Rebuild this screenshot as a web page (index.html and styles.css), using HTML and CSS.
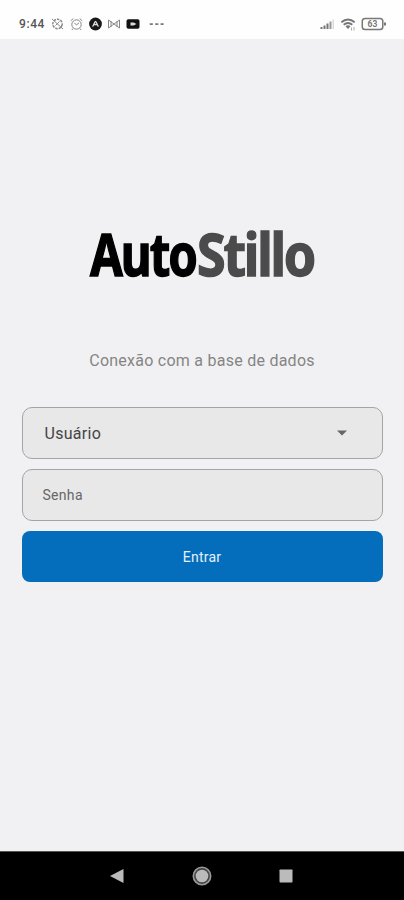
FILE: index.html
```html
<!DOCTYPE html>
<html lang="pt-BR">
<head>
<meta charset="utf-8">
<title>AutoStillo</title>
<link rel="stylesheet" href="styles.css">
</head>
<body>
<header class="status">
  <span class="clock">9:44</span>
  <svg class="status-left" width="118" height="16" viewBox="0 0 118 16" fill="none" stroke="#777" stroke-width="1">
    <g stroke="#888">
      <circle cx="7.500" cy="8" r="4.700" stroke-width="1.500" stroke-dasharray="2.500 1"/>
      <path d="M2 3l11 10M5.500 9.500l4-4M9 13l3-3"/>
    </g>
    <g stroke="#888">
      <circle cx="26.500" cy="8.500" r="4.700"/>
      <path d="M20.800 4.800l2.500-2.300M32.200 4.800l-2.500-2.300M24.300 6.800l2.200 2.200 2.500-2.200M23 12.500l-1.200 1.500M30 12.500l1.200 1.500"/>
    </g>
    <circle cx="45.500" cy="8" r="6.400" fill="#181818" stroke="none"/>
    <path d="M42.500 10.500c1.400-1.200 1.900-5 3-5s1.600 3.800 3 5M44 8.500h3" stroke="#ddd" stroke-width="1.300"/>
    <path d="M58.500 12V4l5.500 4 5.500-4v8l-5.500-4zM61 5v6M67 5v6" stroke="#888"/>
    <rect x="76.500" y="3.300" width="13" height="9.500" rx="1.800" fill="#111" stroke="none"/>
    <path d="M80.500 6.500h3l3 1.500-3 1.500h-3z" fill="#ddd" stroke="none"/>
    <g fill="#777" stroke="none"><rect x="99.500" y="7.200" width="3.600" height="1.700" rx=".8"/><rect x="105" y="7.200" width="3.600" height="1.700" rx=".8"/><rect x="110.300" y="7.200" width="3.600" height="1.700" rx=".8"/></g>
  </svg>
  <svg class="status-right" width="70" height="16" viewBox="0 0 70 16" fill="none" stroke="#777">
    <path d="M2.500 13v-2M5.500 13V9.500M8.500 13V7.500" stroke-width="2" stroke="#777"/>
    <path d="M11.500 13V5.500" stroke-width="2" stroke="#999"/>
    <path d="M14.200 13V3.500" stroke="#ccc" stroke-width="1"/>
    <path d="M22.300 6.300q6.700-5.600 13.400 0M24.700 8.800q4.300-3.600 8.600 0" stroke-width="1.900"/>
    <path d="M26.500 10.200q2.500-1.700 5 0L29 13z" fill="#777" stroke="none"/>
    <path d="M32.500 11.500v3M35 11v3.500" stroke="#aaa"/>
    <rect x="43.300" y="2.500" width="20.500" height="11" rx="2.800" stroke-width="1.500"/>
    <path d="M66 6.500v3" stroke-width="2"/>
    <text class="charge" x="53.500" y="11.200" text-anchor="middle">63</text>
  </svg>
</header>
<main class="login">
  <svg class="logo" width="226" height="54" viewBox="0 0 226 54" role="img" aria-label="AutoStillo">
    <text class="logo-auto" x="1" y="49.500" textLength="106" lengthAdjust="spacingAndGlyphs">Auto</text>
    <text class="logo-stillo" x="108" y="49.500" textLength="117" lengthAdjust="spacingAndGlyphs">Stillo</text>
  </svg>
  <p class="subtitle">Conexão com a base de dados</p>
  <form class="form">
    <div class="field select"><span>Usuário</span>
      <svg width="10" height="6" viewBox="0 0 10 6"><path d="M0 .5h10L5 5.500z" fill="#666"/></svg>
    </div>
    <div class="field">Senha</div>
    <button class="submit" type="button">Entrar</button>
  </form>
</main>
<nav class="navbar">
  <svg width="14" height="16" viewBox="0 0 14 16"><path d="M0 8L13.500 1v14z" fill="#bbb"/></svg>
  <svg width="20" height="20" viewBox="0 0 20 20"><circle cx="10" cy="10" r="8.700" fill="#444" stroke="#999" stroke-width="1.600"/><circle cx="10" cy="10" r="6.300" fill="#bbb"/></svg>
  <svg width="14" height="14" viewBox="0 0 14 14"><rect x=".5" y=".5" width="13" height="13" rx=".7" fill="#bbb"/></svg>
</nav>
</body>
</html>
```
FILE: styles.css
```css
* { box-sizing: border-box; }
body {
  margin: 0;
  height: 900px;
  display: flex;
  flex-direction: column;
  background: #f1f1f3;
  font-family: Roboto, sans-serif;
  overflow: hidden;
}
.status {
  height: 39px;
  padding: 16px 15px 0 19px;
  display: flex;
  align-items: flex-start;
  background: #fefefe;
}
.clock {
  width: 31px;
  font-size: 12px;
  line-height: 16px;
  font-weight: 500;
  letter-spacing: .6px;
  color: #555;
}
.status-right { margin-left: auto; }
.charge { font: 700 8.500px Roboto, sans-serif; fill: #777; stroke: none; }
.login {
  flex: 1;
  display: flex;
  flex-direction: column;
  align-items: center;
  padding: 187px 22px 0;
}
.logo { overflow: visible; }
.logo text {
  font-family: "Noto Sans", sans-serif;
  font-weight: 700;
  font-size: 58.500px;
  letter-spacing: -2.500px;
  stroke-width: 1.400px;
}
.logo-auto { fill: #000; stroke: #000; }
.logo-stillo { fill: #4b4b4b; stroke: #4b4b4b; }
.subtitle {
  margin: 71px 0 0;
  font-size: 16px;
  line-height: 20px;
  letter-spacing: .25px;
  color: #858585;
  white-space: nowrap;
}
.form {
  width: 361px;
  margin-top: 36px;
  display: flex;
  flex-direction: column;
  gap: 10px;
}
.field {
  height: 52px;
  padding: 0 20px;
  display: flex;
  align-items: center;
  border: 1.500px solid #a4a4a4;
  border-radius: 10px;
  background: #e8e8e8;
  font-size: 14px;
  letter-spacing: .3px;
  color: #666;
}
.select {
  padding: 0 35px 0 22px;
  justify-content: space-between;
  font-size: 16px;
  color: #444;
}
.submit {
  height: 51px;
  border: 0;
  border-radius: 8px;
  background: #056ebc;
  color: #e4f1fb;
  font: 400 14px Roboto, sans-serif;
  letter-spacing: .2px;
}
.navbar {
  height: 49px;
  padding: 0 111px 0 110px;
  display: flex;
  align-items: center;
  justify-content: space-between;
  background: #000;
  border-top: 1px solid #555;
}
```
